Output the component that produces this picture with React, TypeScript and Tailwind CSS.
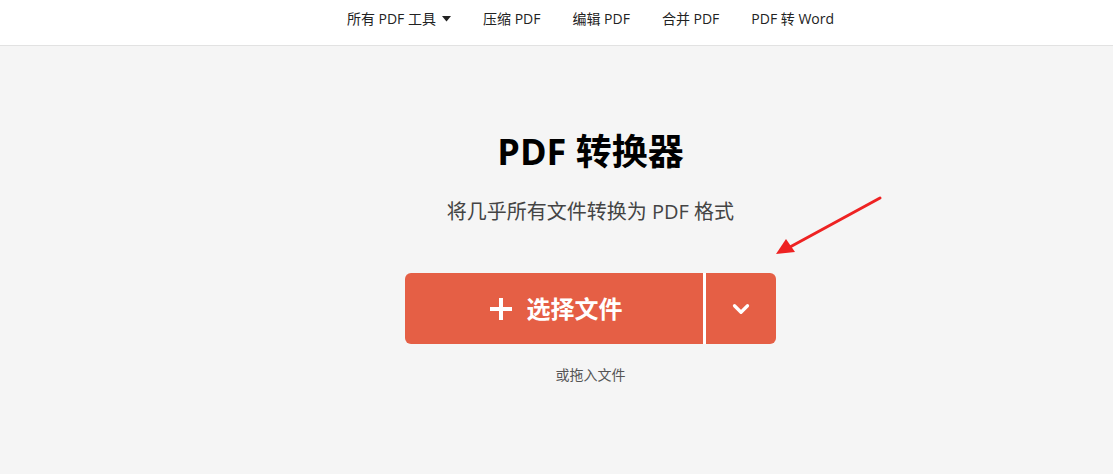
import { ChevronDown } from "lucide-react";

const navItems = ["压缩 PDF", "编辑 PDF", "合并 PDF", "PDF 转 Word"];

export default function App() {
  return (
    <div
      className="relative min-h-screen overflow-hidden bg-[#f5f5f5] text-[#222]"
      style={{ fontFamily: '"Open Sans", "Noto Sans CJK SC", sans-serif' }}
    >
      {/* Header */}
      <header className="flex h-[46px] items-center justify-center border-b border-[#e2e2e2] bg-white pb-[8px] pl-[68px]">
        <nav className="flex items-center gap-8 text-[14px] text-[#222]">
          <span className="flex items-center gap-1.5">
            所有 PDF 工具
            <svg width="9" height="6" viewBox="0 0 9 6">
              <path d="M0 0h9L4.5 5.5z" fill="#222" />
            </svg>
          </span>
          {navItems.map((item) => (
            <span key={item}>{item}</span>
          ))}
        </nav>
      </header>

      {/* Main */}
      <main className="flex flex-col items-center pl-[68px] pt-[84px]">
        <h1 className="text-[36px] font-bold leading-[43px] text-black">PDF 转换器</h1>
        <p className="mt-[25px] text-[20px] leading-[28px] text-[#444]">
          将几乎所有文件转换为 PDF 格式
        </p>

        <div className="mt-[47px] flex h-[71px]">
          <button className="flex w-[298px] items-center justify-center gap-[15px] rounded-l-md bg-[#e55f45] pl-[4px] text-[24px] font-bold text-white">
            <svg width="22" height="22" viewBox="0 0 22 22">
              <path d="M11 0v22M0 11h22" stroke="white" strokeWidth="4" />
            </svg>
            选择文件
          </button>
          <div className="w-[3px] bg-white" />
          <button className="flex w-[70px] items-center justify-center rounded-r-md bg-[#e55f45] text-white">
            <ChevronDown size={26} strokeWidth={3} />
          </button>
        </div>

        <p className="mt-[21px] text-[14px] leading-[20px] text-[#555]">或拖入文件</p>
      </main>

      {/* Annotation arrow */}
      <svg
        className="absolute left-[770px] top-[190px]"
        width="120"
        height="70"
        viewBox="0 0 120 70"
      >
        <line x1="110" y1="8" x2="20" y2="57" stroke="#ee2222" strokeWidth="3" strokeLinecap="round" />
        <path d="M6 64 L16 49 L25 62 Z" fill="#ee2222" />
      </svg>
    </div>
  );
}
